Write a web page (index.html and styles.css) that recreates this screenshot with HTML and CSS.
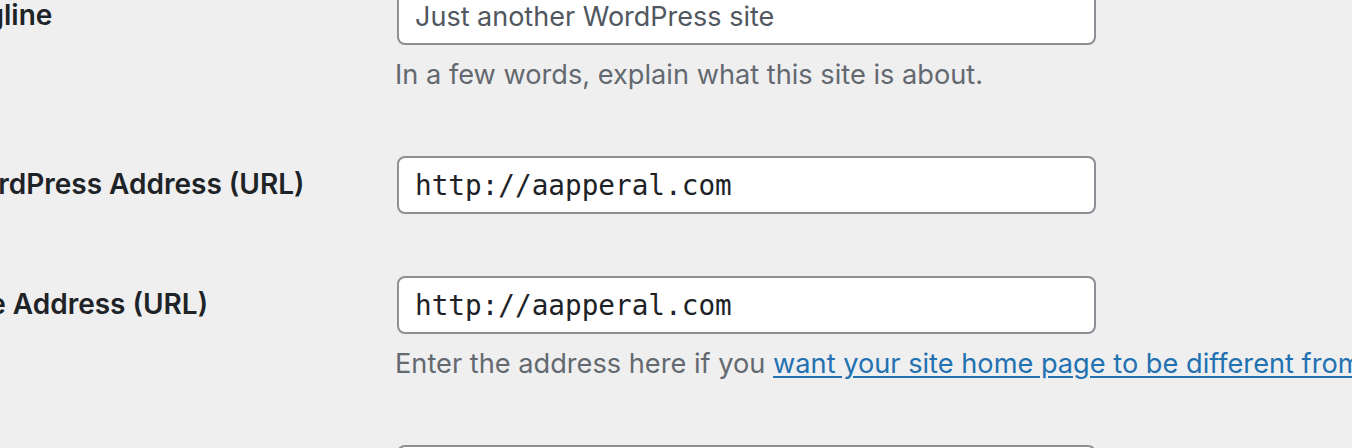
FILE: index.html
```html
<!DOCTYPE html>
<html lang="en">
<head>
<meta charset="utf-8">
<title>General Settings</title>
<link rel="stylesheet" href="styles.css">
</head>
<body>
<div class="form-table">
  <div class="row">
    <div class="th"><label for="blogdescription">Tagline</label></div>
    <div class="td">
      <input id="blogdescription" class="regular-text placeholder" type="text" value="Just another WordPress site">
      <p class="description">In a few words, explain what this site is about.</p>
    </div>
  </div>
  <div class="row">
    <div class="th"><label for="siteurl">WordPress Address (URL)</label></div>
    <div class="td">
      <input id="siteurl" class="regular-text code" type="url" value="http://aapperal.com">
    </div>
  </div>
  <div class="row">
    <div class="th"><label for="home">Site Address (URL)</label></div>
    <div class="td">
      <input id="home" class="regular-text code" type="url" value="http://aapperal.com">
      <p class="description">Enter the address here if you <a href="#">want your site home page to be different from your WordPress installation directory</a>.</p>
    </div>
  </div>
  <div class="row">
    <div class="th"><label for="admin_email">Administration Email Address</label></div>
    <div class="td">
      <input id="admin_email" class="regular-text" type="email" value="admin@aapperal.com">
    </div>
  </div>
</div>
</body>
</html>
```
FILE: styles.css
```css
html, body {
  margin: 0;
  padding: 0;
  background: #efeff0;
  overflow: hidden;
}
body {
  font-family: Inter, "Liberation Sans", sans-serif;
  color: #1d2327;
  width: 1352px;
  height: 448px;
}
.form-table {
  margin-top: -43px;
  margin-left: -46px;
  width: 1600px;
}
.row {
  display: flex;
  align-items: flex-start;
}
.th {
  flex: 0 0 403px;
  padding: 40px 20px 40px 0;
  font-size: 28px;
  font-weight: 600;
  line-height: 36px;
  color: #1d2327;
  white-space: nowrap;
}
.td {
  flex: 1;
  padding: 30px 20px 32px;
}
.regular-text {
  display: block;
  box-sizing: border-box;
  width: 699px;
  height: 58px;
  margin: 0;
  padding: 0 16px;
  border: 2px solid #8c8f94;
  border-radius: 8px;
  background: #fff;
  font-family: Inter, "Liberation Sans", sans-serif;
  font-size: 27px;
  color: #2c3338;
  outline: none;
}
.regular-text.placeholder {
  color: #50575e;
}
.regular-text.code {
  font-family: "DejaVu Sans Mono", "Liberation Mono", monospace;
  font-size: 27.7px;
  color: #1d2327;
}
.description {
  margin: 10px 0 0 -2px;
  font-size: 27.2px;
  line-height: 39px;
  color: #646970;
  white-space: nowrap;
}
.description a {
  color: #2271b1;
  text-decoration: underline;
  text-underline-offset: 3px;
}
```
